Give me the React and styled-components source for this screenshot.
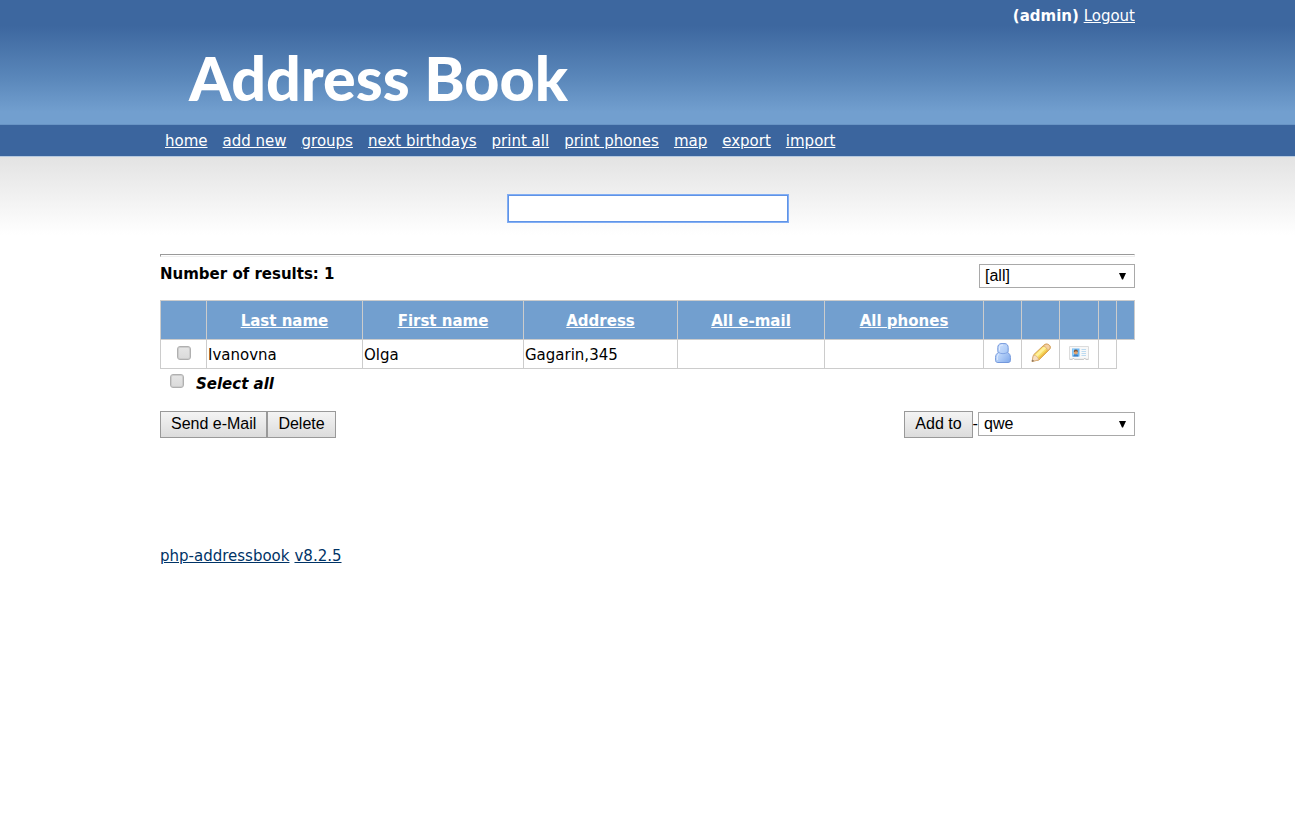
import React, { useState } from "react";
import styled, { createGlobalStyle } from "styled-components";

const GlobalStyle = createGlobalStyle`
  * { box-sizing: border-box; }
  body {
    margin: 0;
    background: #fff;
    color: #000;
    font: 15px/20px Verdana, "DejaVu Sans", sans-serif;
  }
  button, input, select { font: 16px/20px Arial, "Liberation Sans", sans-serif; color: #000; }
`;

const Wrap = styled.div`
  width: calc(100% - 32px);
  max-width: 975px;
  margin: 0 auto;
`;

const Header = styled.header`
  height: 125px;
  background: linear-gradient(#3d679f 0, #3d679f 26px, #5a87ba 78px, #729fcf 112px, #729fcf 124px, #6894c5 124px);
  color: #fff;
`;

const Account = styled.div`
  padding-top: 6px;
  text-align: right;
`;

const WhiteLink = styled.a`
  color: #fff;
`;

const Logo = styled.h1`
  margin: 16px 0 0 29px;
  font: 900 61px/72px Lato, sans-serif;
  white-space: nowrap;
`;

const NavBar = styled.nav`
  background: #3b659e;
  border-bottom: 1px solid #b5c9e0;
`;

const NavList = styled.ul`
  display: flex;
  flex-wrap: wrap;
  gap: 0 15px;
  margin: 0;
  padding: 6px 5px 5px;
  list-style: none;
`;

const Content = styled.main`
  padding-top: 38px;
  background: linear-gradient(#e3e3e3, #ffffff 78px);
`;

const SearchForm = styled.form`
  display: flex;
  justify-content: center;
`;

const SearchInput = styled.input`
  width: 280px;
  height: 27px;
  padding: 2px 4px;
  background: #fff;
  border: 1px solid #5f93e6;
  border-radius: 0;
  box-shadow: 0 0 0 1px #82aef4;
  outline: none;
`;

const Rule = styled.hr`
  height: 3px;
  margin: 32px 0 7px;
  border: 1px solid;
  border-color: #9a9a9a #eee #eee #9a9a9a;
`;

const SummaryRow = styled.div`
  display: flex;
  justify-content: space-between;
  align-items: flex-start;
`;

const SelectBox = styled.span`
  position: relative;
  display: inline-flex;
  width: ${(p) => p.$width}px;
`;

const Select = styled.select`
  appearance: none;
  width: 100%;
  height: 24px;
  padding: 0 24px 0 5px;
  background: #fff;
  border: 1px solid #a9a9a9;
  border-radius: 0;
`;

const Arrow = styled.svg`
  position: absolute;
  top: 8px;
  right: 9px;
  pointer-events: none;
`;

const Table = styled.table`
  width: 100%;
  margin-top: 12px;
  table-layout: fixed;
  border-collapse: collapse;
`;

const HeadCell = styled.th`
  height: 39px;
  padding: 3px 2px 1px;
  background: #729fcf;
  border: 1px solid #ccc;
  color: #fff;
`;

const Cell = styled.td`
  height: 29px;
  padding: ${(p) => (p.$center ? "0 2px 2px" : "1px 1px 0")};
  border: 1px solid #ccc;
  text-align: ${(p) => (p.$center ? "center" : "left")};
`;

const Check = styled.input`
  appearance: none;
  width: 14px;
  height: 14px;
  margin: 0;
  background: linear-gradient(#e6e6e6, #dadada);
  border: 1px solid #b0b0b0;
  border-radius: 3px;
  box-shadow: inset 0 0 0 1px #cdcdcd;
  vertical-align: middle;
  &:checked { background: #6b7f99; }
`;

const CellCheck = styled(Check)`
  display: block;
  margin: 0 auto;
`;

const IconLink = styled.a`
  display: flex;
  justify-content: center;
`;

const SelectAll = styled.label`
  display: flex;
  gap: 12px;
  width: max-content;
  margin-top: 5px;
  padding-left: 10px;
  font-weight: bold;
  font-style: italic;
`;

const Actions = styled.div`
  display: flex;
  justify-content: space-between;
  margin-top: 17px;
`;

const Group = styled.div`
  display: flex;
  align-items: flex-start;
  line-height: 26px;
`;

const ActionSelect = styled.div`
  display: flex;
  padding-top: 1px;
`;

const Button = styled.button`
  height: 27px;
  padding: 0 10px 2px;
  background: linear-gradient(#f4f4f4, #dcdcdc);
  border: 1px solid #999;
  border-radius: 0;
`;

const Footer = styled.footer`
  padding: 108px 0 24px;
`;

const FooterLink = styled.a`
  color: #003366;
  margin-right: 5px;
`;

const links = ["home", "add new", "groups", "next birthdays", "print all", "print phones", "map", "export", "import"];
const columns = [
  [46, ""], [156, "Last name"], [161, "First name"], [154, "Address"], [147, "All e-mail"],
  [159, "All phones"], [38, ""], [38, ""], [39, ""], [18, ""], [18, ""],
];

function Dropdown({ label, options, width }) {
  return (
    <SelectBox $width={width}>
      <Select aria-label={label}>
        {options.map((o) => <option key={o}>{o}</option>)}
      </Select>
      <Arrow width="7" height="8" viewBox="0 0 7 8" aria-hidden="true"><path d="M0 1h7L4 7.5H3z" /></Arrow>
    </SelectBox>
  );
}

function PersonIcon() {
  return (
    <svg width="16" height="20" viewBox="0 0 16 20" aria-hidden="true">
      <defs>
        <linearGradient id="person" x1="0" y1="0" x2="1" y2="1">
          <stop stopColor="#d3e3fd" /><stop offset=".5" stopColor="#b3cff8" /><stop offset="1" stopColor="#7fa8ea" />
        </linearGradient>
      </defs>
      <path d="M6 .6h4c2 .2 3.2 1.8 3.2 4v3.3c0 .7-.2 1.2-.6 1.6 1.8.9 2.8 2.6 2.8 4.8v3c0 1.6-.9 2.2-2.3 2.2H2.9C1.5 19.5.6 18.9.6 17.300v-3c0-2.200 1-3.900 2.800-4.800-.4-.4-.6-.9-.6-1.600V4.600C2.800 2.400 4 .8 6 .6z" fill="url(#person)" stroke="#7398dc" />
      <path d="M3.400 9.400c2.300 1.700 6.900 1.700 9.200 0" fill="none" stroke="#83a6e4" />
      <path d="M4.500 7.500V4.600C4.700 2.700 5.800 2 8 2M2.300 17v-2.700c.2-1.700.8-2.600 1.900-3.200" fill="none" stroke="#e8f1ff" opacity=".8" />
    </svg>
  );
}

function PencilIcon() {
  return (
    <svg width="20" height="20" viewBox="0 0 20 20" aria-hidden="true">
      <path d="M1 18.400 2.500 11.900 12.800 2.200c1-1 2-1.200 3.200-1.100 1.800.2 3.100 1.400 3.300 3 .1 1-.2 1.800-1 2.600L7.800 17z" fill="#f7dc62" stroke="#d29a50" />
      <path d="m3.900 12.200 9.700-9.200 2 1.700-9.800 9.500z" fill="#fff09b" />
      <path d="m6.800 15.600 10-9.500 1.100.9-9.900 9.400z" fill="#edbb45" />
      <path d="m12.200 3.300 1.700-1.500c1.400-1 3.500-.6 4.500.7.900 1.300.8 2.800-.3 3.900l-1.700 1.500c.2-2.200-1.700-4.600-4.200-4.600z" fill="#f5d0a1" stroke="#d5a56c" strokeWidth=".7" />
      <path d="M1 18.400 2.600 12.200c2.300 0 4.700 2 5 4.500z" fill="#f7dec0" stroke="#d5ad80" strokeWidth=".7" />
      <path d="m.9 18.700.6-2.200 1.600 1.500z" fill="#776657" />
    </svg>
  );
}

function CardIcon() {
  return (
    <svg width="20" height="20" viewBox="0 -3 20 20" aria-hidden="true">
      <path d="M.5.5h19v12.800h-2.700l-1-1.300-1.100 1.300H5.500L4.400 12l-1.100 1.300H.5z" fill="#f8f8f8" stroke="#dcdcdc" />
      <path d="M.8 13.400h2.600l1-1.200 1.100 1.200h9.200l1.100-1.200 1 1.200h2.600" fill="none" stroke="#c2c2c2" strokeWidth=".8" />
      <path d="M3 2.500h7.500v8H3z" fill="#6ab7f4" />
      <path d="M3.500 3h1.500v7H3.500z" fill="#98d2fb" />
      <path d="M4.200 10.500c.1-1.800 1-2.600 2.500-2.600s2.600.8 2.700 2.600z" fill="#3c7fc4" />
      <circle cx="6.800" cy="6.400" r="2" fill="#e2a36c" />
      <path d="M4.800 6c0-3.200 4.200-3.200 4.100 0-1-.2-1.700-.6-2.100-1-.4.6-1 1-2 1z" fill="#80583c" />
      <path d="M12.500 3.500H17M12.500 5.500H17M12.500 7.500H17M12.500 9.500H17" stroke="#bcdaf0" />
    </svg>
  );
}

export default function App() {
  const [query, setQuery] = useState("");
  return (
    <>
      <GlobalStyle />
      <Header>
        <Wrap>
          <Account><b>(admin)</b> <WhiteLink href="#logout">Logout</WhiteLink></Account>
          <Logo>Address Book</Logo>
        </Wrap>
      </Header>
      <NavBar>
        <Wrap>
          <NavList>
            {links.map((l) => <li key={l}><WhiteLink href={"#" + l.replace(" ", "-")}>{l}</WhiteLink></li>)}
          </NavList>
        </Wrap>
      </NavBar>
      <Content>
        <Wrap>
          <SearchForm role="search">
            <SearchInput type="text" aria-label="Search" value={query} onChange={(e) => setQuery(e.target.value)} />
          </SearchForm>
          <Rule />
          <SummaryRow>
            <b>Number of results: 1</b>
            <Dropdown label="Group" options={["[all]", "[none]", "qwe"]} width={156} />
          </SummaryRow>
          <Table>
            <colgroup>{columns.map(([w], i) => <col key={i} width={w} />)}</colgroup>
            <thead>
              <tr>
                {columns.map(([, name], i) => (
                  <HeadCell key={i}>{name && <WhiteLink href="#sort">{name}</WhiteLink>}</HeadCell>
                ))}
              </tr>
            </thead>
            <tbody>
              <tr>
                <Cell $center><CellCheck type="checkbox" aria-label="Select Olga Ivanovna" /></Cell>
                <Cell>Ivanovna</Cell>
                <Cell>Olga</Cell>
                <Cell>Gagarin,345</Cell>
                <Cell />
                <Cell />
                <Cell $center><IconLink href="#details" aria-label="Details"><PersonIcon /></IconLink></Cell>
                <Cell $center><IconLink href="#edit" aria-label="Edit"><PencilIcon /></IconLink></Cell>
                <Cell $center><IconLink href="#vcard" aria-label="vCard"><CardIcon /></IconLink></Cell>
                <Cell />
              </tr>
            </tbody>
          </Table>
          <SelectAll><Check type="checkbox" /><span>Select all</span></SelectAll>
          <Actions>
            <Group>
              <Button type="button">Send e-Mail</Button>
              <Button type="button">Delete</Button>
            </Group>
            <Group>
              <Button type="button">Add to</Button>-
              <ActionSelect>
                <Dropdown label="Add to group" options={["qwe"]} width={157} />
              </ActionSelect>
            </Group>
          </Actions>
          <Footer>
            <FooterLink href="#project">php-addressbook</FooterLink>
            <FooterLink href="#version">v8.2.5</FooterLink>
          </Footer>
        </Wrap>
      </Content>
    </>
  );
}
